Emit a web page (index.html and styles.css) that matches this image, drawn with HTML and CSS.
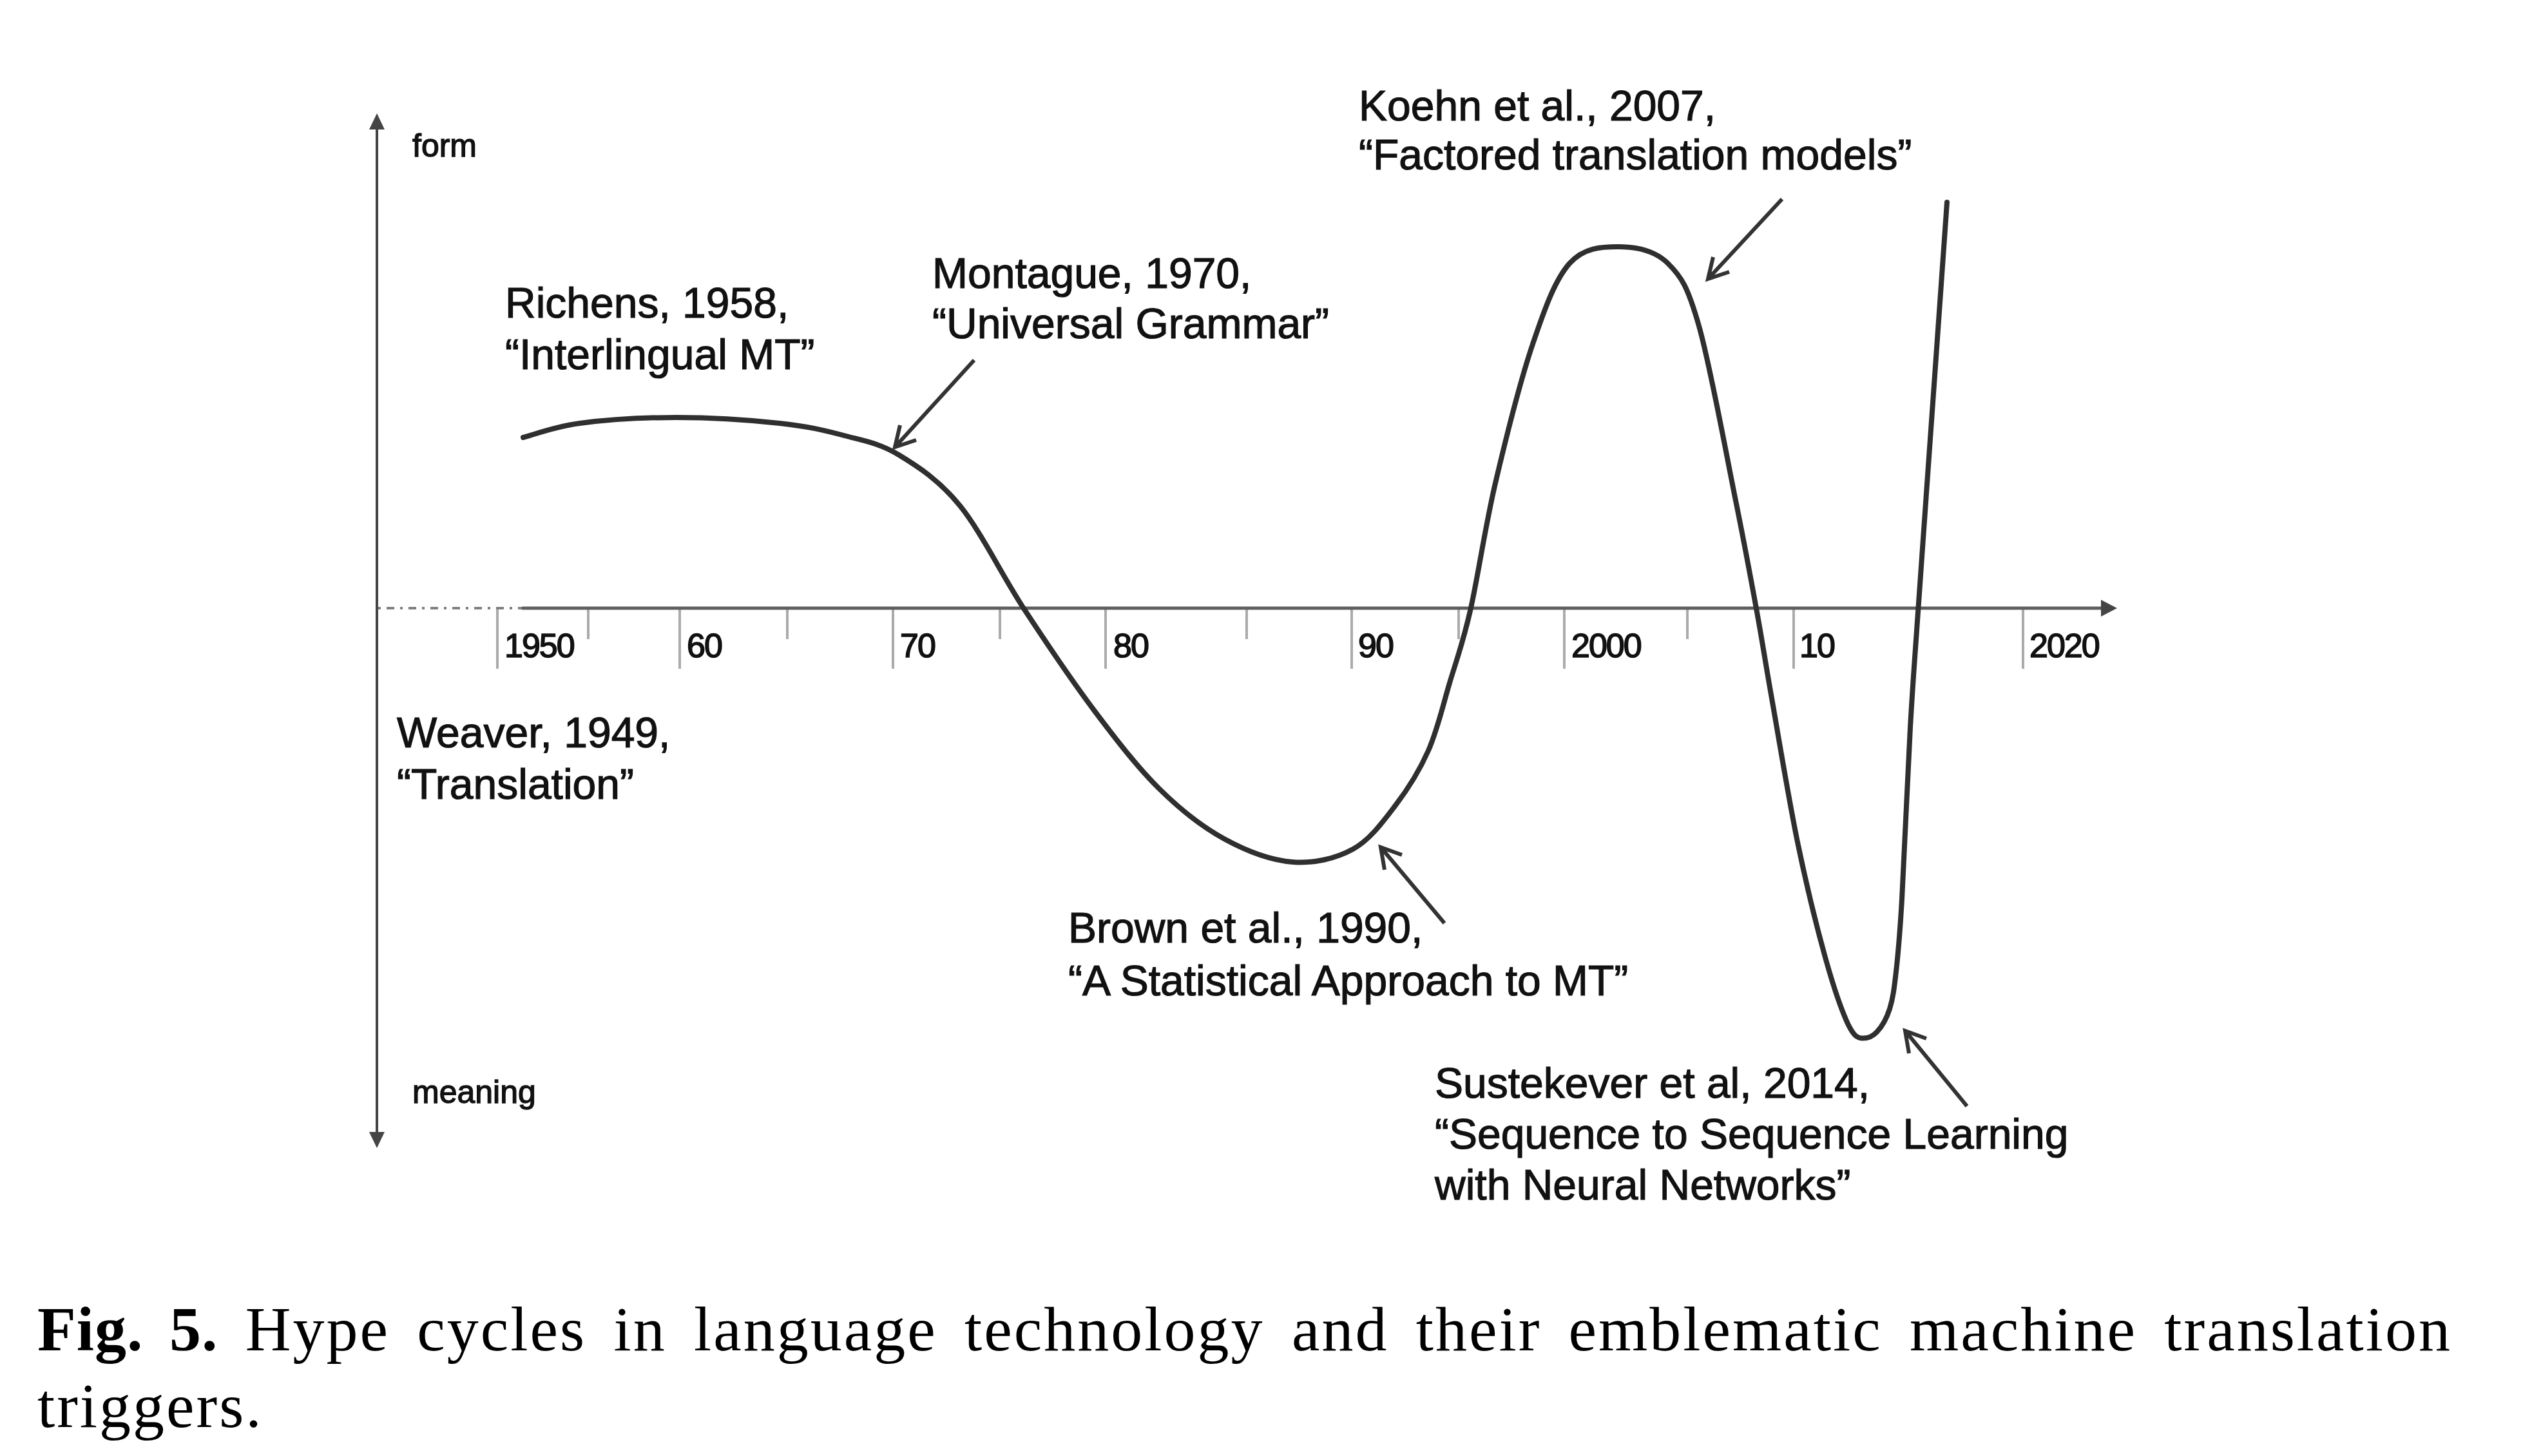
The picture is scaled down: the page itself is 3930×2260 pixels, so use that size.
FILE: index.html
```html
<!DOCTYPE html>
<html lang="en">
<head>
<meta charset="utf-8">
<title>Fig. 5. Hype cycles in language technology</title>
<link rel="stylesheet" href="styles.css">
</head>
<body>
<figure class="figure">
  <svg class="chart" width="3930" height="1960" viewBox="0 0 3930 1960" xmlns="http://www.w3.org/2000/svg">
    <!-- vertical axis -->
    <line class="axis-line" x1="585" y1="196" x2="585" y2="1762"/>
    <polygon class="axis-head" points="585,176 573,201 597,201"/>
    <polygon class="axis-head" points="585,1782 573,1757 597,1757"/>
    <text class="lbl axis-lbl" x="640" y="243">form</text>
    <text class="lbl axis-lbl" x="640" y="1712">meaning</text>

    <!-- ticks -->
    <path class="tick" d="M772 944V1038 M1055 944V1038 M1386 944V1038 M1716 944V1038 M2098 944V1038 M2428 944V1038 M2784 944V1038 M3140 944V1038"/>
    <path class="tick" d="M913 944V992 M1222 944V992 M1552 944V992 M1935 944V992 M2264 944V992 M2619 944V992"/>

    <!-- horizontal axis -->
    <line class="x-dots" x1="587" y1="944" x2="810" y2="944"/>
    <line class="x-line" x1="810" y1="944" x2="3266" y2="944"/>
    <polygon class="axis-head" points="3286,944 3261,931 3261,957"/>

    <text class="lbl tick-lbl" x="783" y="1020">1950</text>
    <text class="lbl tick-lbl" x="1066" y="1020">60</text>
    <text class="lbl tick-lbl" x="1397" y="1020">70</text>
    <text class="lbl tick-lbl" x="1728" y="1020">80</text>
    <text class="lbl tick-lbl" x="2108" y="1020">90</text>
    <text class="lbl tick-lbl" x="2439" y="1020">2000</text>
    <text class="lbl tick-lbl" x="2793" y="1020">10</text>
    <text class="lbl tick-lbl" x="3150" y="1020">2020</text>

    <!-- hype curve -->
    <path class="curve" d="M812,679
      C826.7,675.3 860.3,662.2 900,657
      C939.7,651.8 998.3,648 1050,648
      C1101.7,648 1166.7,652.3 1210,657
      C1253.3,661.7 1279.2,667.8 1310,676
      C1340.8,684.2 1365,687.8 1395,706
      C1425,724.2 1457.5,745 1490,785
      C1522.5,825 1555,892.7 1590,946
      C1625,999.3 1665,1058.5 1700,1105
      C1735,1151.5 1766.7,1192.2 1800,1225
      C1833.3,1257.8 1865.7,1283.2 1900,1302
      C1934.3,1320.8 1972.7,1335.3 2006,1338
      C2039.3,1340.7 2073.3,1332.7 2100,1318
      C2126.7,1303.3 2146.5,1275.5 2166,1250
      C2185.5,1224.5 2203,1196.7 2217,1165
      C2231,1133.3 2239.2,1096.2 2250,1060
      C2260.8,1023.8 2270.2,999.7 2282,948
      C2293.8,896.3 2304.8,819 2321,750
      C2337.2,681 2359.8,590.8 2379,534
      C2398.2,477.2 2413.8,434.2 2436,409
      C2458.2,383.8 2486.5,383 2512,383
      C2537.5,383 2568.2,388.5 2589,409
      C2609.8,429.5 2619.5,444.7 2637,506
      C2654.5,567.3 2679,703 2694,777
      C2709,851 2717.7,898.8 2727,950
      C2736.3,1001.2 2739.5,1024.5 2750,1084
      C2760.5,1143.5 2776.2,1240 2790,1307
      C2803.8,1374 2819.7,1438.3 2833,1486
      C2846.3,1533.7 2858.5,1568.2 2868,1589
      C2877.5,1608.5 2882.8,1611 2890,1611.5
      C2897.2,1612 2905.8,1609.5 2913,1602
      C2920.2,1594.5 2928,1581.7 2933,1566
      C2938,1550.3 2939.8,1536.3 2943,1508
      C2946.2,1479.7 2948.3,1459.2 2952,1396
      C2955.7,1332.8 2960.8,1203.3 2965,1129
      C2969.2,1054.7 2971.3,1032.8 2977,950
      C2982.7,867.2 2992,738 2999.5,632
      C3007,526 3018.3,367 3022,314"/>

    <!-- pointers -->
    <path class="pointer" d="M1512,559 L1389,694 M1397,660 L1389,694 L1422,683"/>
    <path class="pointer" d="M2766,309 L2651,433 M2659,399 L2651,433 L2684,422"/>
    <path class="pointer" d="M2242,1433 L2143,1315 M2149,1350 L2143,1315 L2176,1327"/>
    <path class="pointer" d="M3053,1717 L2957,1600 M2963,1635 L2957,1600 L2990,1612"/>

    <!-- annotations -->
    <text class="lbl" x="784" y="493">Richens, 1958,</text>
    <text class="lbl" x="784" y="573">“Interlingual MT”</text>

    <text class="lbl" x="1447" y="447">Montague, 1970,</text>
    <text class="lbl" x="1447" y="525">“Universal Grammar”</text>

    <text class="lbl" x="2109" y="187">Koehn et al., 2007,</text>
    <text class="lbl" x="2109" y="263">“Factored translation models”</text>

    <text class="lbl" x="616" y="1160">Weaver, 1949,</text>
    <text class="lbl" x="616" y="1240">“Translation”</text>

    <text class="lbl" x="1658" y="1463">Brown et al., 1990,</text>
    <text class="lbl" x="1658" y="1545">“A Statistical Approach to MT”</text>

    <text class="lbl" x="2227" y="1704">Sustekever et al, 2014,</text>
    <text class="lbl" x="2227" y="1783">“Sequence to Sequence Learning</text>
    <text class="lbl" x="2227" y="1862">with Neural Networks”</text>
  </svg>
  <figcaption class="caption">
    <span class="caption-line"><b class="fig-no">Fig. 5.</b> Hype cycles in language technology and their emblematic machine translation</span>
    <span class="caption-line caption-last">triggers.</span>
  </figcaption>
</figure>
</body>
</html>
```

FILE: styles.css
```css
html, body {
  margin: 0;
  padding: 0;
  background: #ffffff;
}

.figure {
  margin: 0;
  width: 3930px;
}

.chart {
  display: block;
}

.axis-line {
  stroke: #454545;
  stroke-width: 4;
}

.axis-head {
  fill: #454545;
}

.x-line {
  stroke: #5e5e5e;
  stroke-width: 5;
}

.x-dots {
  stroke: #808080;
  stroke-width: 4;
  stroke-dasharray: 4 9 12 9;
}

.tick {
  fill: none;
  stroke: #ababab;
  stroke-width: 4;
}

.curve {
  fill: none;
  stroke: #2f2f2f;
  stroke-width: 8;
  stroke-linecap: round;
  stroke-linejoin: round;
}

.pointer {
  fill: none;
  stroke: #333333;
  stroke-width: 6;
  stroke-linejoin: miter;
}

.lbl {
  font-family: "Liberation Sans", Arial, Helvetica, sans-serif;
  font-size: 66px;
  fill: #111111;
  stroke: #111111;
  stroke-width: 1.2px;
}

.tick-lbl {
  font-size: 52px;
  letter-spacing: -2px;
  stroke-width: 1.6px;
}

.axis-lbl {
  font-size: 50px;
  stroke-width: 1.4px;
}

.caption {
  display: block;
  box-sizing: content-box;
  width: 3748px;
  margin: 0;
  padding: 44px 0 0 58px;
  font-family: "Liberation Serif", "Times New Roman", Times, serif;
  font-size: 98px;
  line-height: 119px;
  letter-spacing: 3px;
  color: #000000;
}

.caption-line {
  display: block;
  text-align: justify;
  text-align-last: justify;
}

.caption-last {
  text-align-last: left;
}

.fig-no {
  font-weight: bold;
  letter-spacing: 1px;
}
```
